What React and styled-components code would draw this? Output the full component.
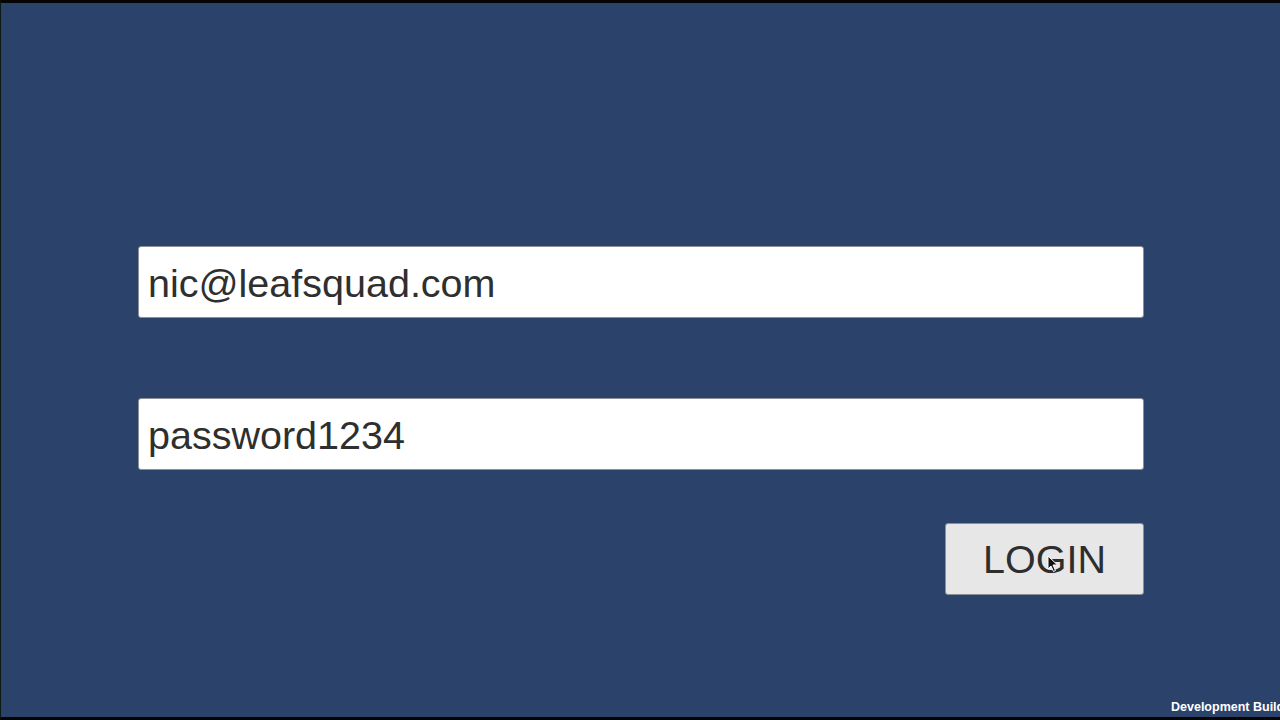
import React from 'react';
import styled, { createGlobalStyle } from 'styled-components';

const GlobalStyle = createGlobalStyle`
  html, body {
    margin: 0;
    padding: 0;
    background: #000;
  }
`;

const Screen = styled.div`
  position: relative;
  width: 1280px;
  height: 720px;
  box-sizing: border-box;
  border-top: 3px solid #050505;
  border-bottom: 3px solid #050505;
  border-left: 1px solid #0c1a14;
  background: #2b426b;
  overflow: hidden;
  font-family: 'Liberation Sans', Arial, sans-serif;
`;

const Form = styled.div`
  display: flex;
  flex-direction: column;
  width: 1006px;
  margin-left: 137px;
  padding-top: 243px;
`;

const Field = styled.div`
  box-sizing: border-box;
  height: 72px;
  margin-bottom: ${p => p.$gap || 0}px;
  display: flex;
  align-items: center;
  padding: 3px 9px 0;
  background: #fff;
  border: 1px solid #8a8f99;
  border-radius: 3px;
  color: #2f2f2f;
  font-size: 39.5px;
  white-space: nowrap;
`;

const Actions = styled.div`
  display: flex;
  justify-content: flex-end;
`;

const LoginButton = styled.div`
  position: relative;
  box-sizing: border-box;
  width: 199px;
  height: 72px;
  margin-top: -1px;
  display: flex;
  align-items: center;
  justify-content: center;
  padding-top: 1px;
  background: #e7e7e7;
  border: 1px solid #8a8f99;
  border-radius: 3px;
  color: #2e2e2e;
  font-size: 39.5px;
`;

const Cursor = styled.svg`
  position: absolute;
  left: 101px;
  top: 31px;
`;

const BuildLabel = styled.div`
  position: absolute;
  left: 1170px;
  bottom: 3px;
  color: #fff;
  font-family: 'Liberation Sans', Arial, sans-serif;
  font-weight: bold;
  font-size: 12.5px;
  white-space: nowrap;
`;

export default function App() {
  return (
    <>
      <GlobalStyle />
      <Screen>
        <Form>
          <Field $gap={80}>nic@leafsquad.com</Field>
          <Field $gap={54}>password1234</Field>
          <Actions>
            <LoginButton>
              LOGIN
              <Cursor width="12" height="18" viewBox="0 0 12 18">
                <path d="M1 1 L1 14 L4 11 L6.5 16.5 L8.5 15.5 L6 10 L10.5 10 Z" fill="#111" stroke="#fff" strokeWidth="1" />
              </Cursor>
            </LoginButton>
          </Actions>
        </Form>
        <BuildLabel>Development Build</BuildLabel>
      </Screen>
    </>
  );
}
